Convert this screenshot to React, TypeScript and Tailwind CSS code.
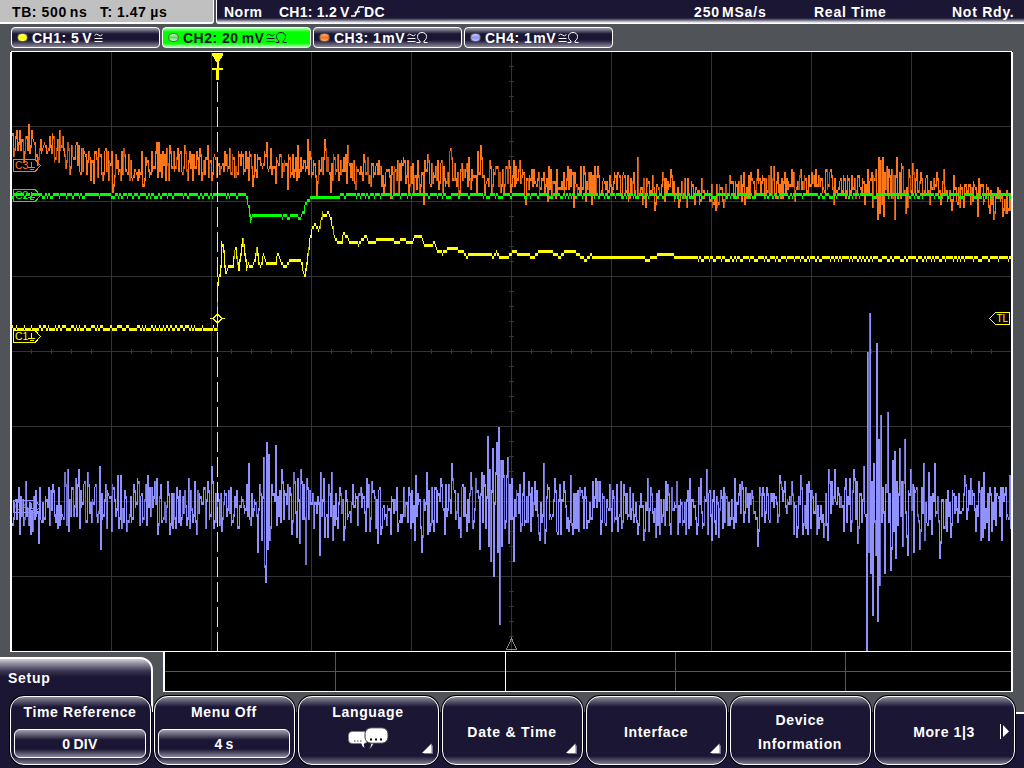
import React from "react";

const FONT = "[font-family:'Liberation_Sans',Arial,sans-serif]";

/* ---------- signal data: [x, y] peaks in screen units ---------- */

const CH4_PEAKS = `19,487 20,535 26,481 33,532 39,544 40,487 42,523 46,496 50,526 53,484 56,522 58,529 65,472 67,526 68,469 69,531 73,487 76,478 77,516 79,469 80,529 85,481 88,472 92,523 96,484 98,522 100,466 101,550 106,484 107,529 112,532 113,484 118,475 120,520 121,475 122,529 125,490 129,522 133,520 135,490 140,526 142,493 146,484 147,526 148,475 152,487 155,481 157,478 158,535 161,484 163,523 166,522 168,481 172,493 177,487 184,513 187,526 189,478 193,523 197,535 200,493 205,487 208,481 210,520 212,466 218,493 223,520 225,490 229,490 233,523 237,490 239,529 245,514 249,463 251,526 258,553 260,484 262,541 264,457 265,568 266,583 267,442 268,550 269,454 270,541 272,484 274,493 276,445 277,526 278,496 281,523 282,469 284,520 288,484 290,487 292,535 294,472 297,538 300,544 301,469 304,484 306,565 307,478 309,520 314,529 320,556 321,472 324,478 326,520 328,538 329,484 332,472 333,541 338,529
340,487 344,541 346,490 351,523 353,484 358,526 361,487 366,532 370,532 374,490 376,529 378,544 380,487 381,535 387,526 391,535 392,496 397,487 402,523 404,487 408,523 415,541 416,475 422,553 427,472 429,490 432,487 434,532 438,490 445,535 446,484 452,463 454,487 459,529 461,538 463,484 465,487 467,532 469,523 471,472 473,529 476,478 478,490 480,550 482,472 484,475 486,528 488,436 489,547 490,469 491,562 493,448 494,577 496,472 497,442 498,553 499,427 500,625 501,460 502,547 503,460 505,529 507,475 508,457 509,544 512,478 514,562 517,490 520,484 524,472 525,526 529,481 532,487 535,481 539,535 540,541 544,463 545,544 549,487 552,520 555,478 558,535 560,484 561,535 564,481 567,528 569,532 571,475 573,535 577,528 579,532 582,490 585,487 592,520 596,478 600,481 601,535 606,526 610,484 612,532 617,484 619,520 621,481 622,529 627,493 634,523 638,535 641,493 644,541 648,478 651,487 656,538 659,490 665,526 668,484 671,535 672,487 677,481 678,535
683,526 686,535 688,490 690,478 693,499 697,535 701,478 707,469 708,535 710,490 712,541 714,490 716,535 721,490 723,529 726,492 730,526 734,529 735,478 740,484 744,523 746,487 749,522 752,490 757,520 758,547 760,487 763,487 765,522 770,522 773,493 778,523 780,475 782,487 785,481 787,515 792,481 797,538 801,475 806,529 807,484 808,535 809,481 812,490 819,529 822,523 824,538 826,493 828,541 829,469 835,469 838,487 842,508 844,532 846,478 850,478 851,532 854,469 856,520 858,544 861,493 864,466 866,517 867,651 868,352 869,553 870,313 871,574 872,481 873,616 874,463 876,556 877,343 878,622 879,439 880,586 881,415 883,487 885,574 888,412 889,523 891,571 893,460 895,451 896,558 898,526 900,448 903,547 905,439 907,538 908,556 911,469 914,553 917,487 919,523 920,550 924,463 925,541 928,526 929,472 932,535 935,463 937,514 940,559 943,499 945,529 948,490 951,538 956,496 958,523 965,475 967,520 971,478 973,490 976,532 979,481 981,541 983,538 984,472 989,541 990,487 992,532 998,493 1000,516 1002,541 1006,487 1009,519 1010,475 1011,529`;

const CH3_PEAKS = `13,133 14,156 17,130 18,150 20,130 24,162 26,136 30,153 34,139 38,165 41,139 43,150 49,152 53,133 57,152 60,130 61,150 64,148 66,168 73,154 80,171 81,174 85,151 91,180 92,160 94,183 97,157 100,154 103,180 106,148 109,180 112,152 113,192 114,186 116,154 121,180 125,154 128,174 133,180 138,180 142,151 149,168 152,151 154,170 157,142 159,142 160,172 163,152 166,180 170,145 172,170 175,172 178,148 181,151 183,174 185,145 188,180 190,150 193,180 197,152 199,175 202,180 208,145 212,180 215,154 220,175 225,150 228,172 230,148 232,174 237,177 242,151 244,174 249,180 251,155 253,186 257,177 260,157 263,168 267,142 269,171 271,147 274,166 276,184 281,154 284,171 288,189 293,155 298,145 302,172 305,160 308,139 310,152 312,177 317,196 321,172 325,139 328,157 331,194 333,180 335,157
342,174 344,157 348,145 349,160 353,181 356,190 358,170 364,154 366,171 369,183 371,186 377,163 382,186 384,192 387,169 389,169 391,198 394,196 396,170 399,194 402,160 404,157 408,160 409,193 413,163 417,189 420,195 422,172 424,204 426,168 428,154 431,188 436,166 439,190 441,163 442,160 443,192 446,188 448,171 450,150 451,148 453,180 457,188 459,200 462,163 467,163 471,189 475,175 478,151 479,172 481,145 483,174 486,188 490,160 493,186 498,166 502,186 507,166 509,160 511,192 514,160 517,184 520,160 522,178 525,200 526,204 530,176 532,169 534,169 537,188 539,172 544,172 548,201 550,190 552,200 554,180 557,169 563,190 568,166 571,188 574,207 576,181 581,166 584,166 587,182 592,204 595,166 598,166 601,196 604,178 608,195 611,184 615,173 619,172 622,196 624,172 627,192 634,172 636,198 637,200 638,157 639,200 642,188 646,207 649,181 652,192 655,210 656,204 659,187 663,172 667,196 669,190 674,181 676,200 679,208
682,181 684,198 687,207 692,181 695,204 700,206 703,190 706,196 710,203 713,207 717,184 721,186 724,207 728,200 732,181 735,196 739,181 744,172 748,200 753,178 755,198 758,169 761,192 763,175 765,200 769,176 772,196 774,166 776,200 782,178 785,172 788,190 792,169 796,192 801,169 804,190 807,195 812,172 816,169 821,178 825,192 827,169 831,169 834,205 838,193 841,179 845,178 850,196 855,178 857,192 859,175 862,196 867,193 870,180 872,172 873,207 876,169 877,200 878,219 879,157 880,214 881,160 882,205 883,157 884,217 886,190 887,166 888,195 889,169 891,196 892,169 893,200 895,219 897,157 899,195 902,163 903,166 906,214 909,169 911,194 913,163 915,194 917,169 921,172 924,196 927,175 930,204 937,172 941,204 944,169 948,201 952,210 955,190 958,204 961,184 964,207 970,184 973,202 975,184 978,216 982,184 986,200 990,213 994,219 997,200 1000,190 1003,216 1005,200 1008,213 1010,194 1011,210`;

const CH1_PATH = `12,329 216,329 217,283 219,274 220,265 221,241 223,250 224,265 225,273 226,272 228,266 232,266 234,250 235,248 236,257 238,270 239,260 242,239 244,254 246,269 248,263 249,266 252,267 254,260 256,248 258,262 260,266 263,254 266,263 270,263 275,262 277,254 279,257 281,263 285,267 288,262 292,261 300,261 302,268 304,276 305,270 307,255 309,240 311,230 314,224 318,230 320,222 322,212 324,216 328,212 330,218 332,228 334,236 337,242 341,242 343,233 347,237 349,242 356,242 358,245 361,240 366,236 368,242 373,243 376,240 392,240 397,243 402,239 408,242 412,241 415,236 421,236 424,245 431,245 434,242 437,251 442,253 446,250 450,248 455,248 459,251 463,251 466,257 470,254 490,254 493,257 496,252 500,258 506,258 510,254 514,251 518,254 528,254 532,258 538,252 550,251 559,257 565,252 573,251 577,254 585,260 590,255 594,257 608,256 620,257 643,257 646,260 652,258 660,254 670,254 675,257 1011,257`;

const CH2_PATH = `12,194 245,194 246,198 248,206 249,215 250,221 252,215 301,215 303,212 304,206 308,200 311,197 339,197 341,194 1011,194`;

const CH3_TREND = "12,147 55,150 75,158 100,167 240,165 300,164 400,174 470,176 520,178 600,184 680,194 740,188 800,184 870,186 960,192 1011,200";

const parse = (s: string): number[][] =>
  s.trim().split(/\s+/).map((p) => p.split(",").map(Number));

const X0 = 12;
const X1 = 1010;

function rng(seed: number) {
  let s = seed;
  return () => {
    s = (s * 1664525 + 1013904223) % 4294967296;
    return s / 4294967296;
  };
}

function interpolate(points: number[][], x: number): number {
  for (let i = 1; i < points.length; i++) {
    if (x <= points[i][0]) {
      const [xa, ya] = points[i - 1];
      const [xb, yb] = points[i];
      return ya + ((yb - ya) * (x - xa)) / (xb - xa);
    }
  }
  return points[points.length - 1][1];
}

const quantize = (y: number) => 3 * Math.floor((y - 1) / 3) + 1;

/* One vertical span per pixel column, joining it to the previous sample. */
function columns(samples: number[], seed: number, dimShare: number) {
  const rand = rng(seed);
  let bright = "";
  let dim = "";
  for (let i = 0; i < samples.length; i++) {
    const cur = samples[i];
    const prev = samples[Math.max(0, i - 1)];
    const apart = Math.abs(cur - prev) > 3;
    const a = apart ? Math.min(prev, cur) : cur;
    const b = (apart ? Math.max(prev, cur) : cur) + 3;
    const d = `M${X0 + i} ${a}h1V${Math.min(b, 651)}h-1z`;
    if (apart && rand() < dimShare) dim += d;
    else bright += d;
  }
  return { bright, dim };
}

function noisy(peaks: string, centre: (x: number) => number, spread: number, seed: number) {
  const rand = rng(seed);
  const marks = new Map(parse(peaks).map(([x, y]) => [x - 1, y]));
  const out: number[] = [];
  let side = 1;
  let hold = 0;
  let drift = 0;
  let last = centre(X0);
  for (let x = X0; x <= X1; x++) {
    drift = drift * 0.85 + (rand() - 0.5) * spread * 0.5;
    const c = centre(x) + drift;
    const m = marks.get(x);
    if (m !== undefined) {
      last = m > c ? m - 2 : m + 1;
      side = m > c ? -1 : 1;
      hold = rand() < 0.4 ? 1 : 0;
    } else if (hold > 0) {
      hold--;
      last += (c - last) * 0.35;
    } else {
      last = c + side * spread * 1.15 * rand();
      if (rand() < 0.85) side = -side;
      hold = rand() < 0.35 ? 1 : 0;
    }
    out.push(quantize(last));
  }
  return out;
}

function dithered(path: string, seed: number, amount: (x: number) => number, longest: number) {
  const rand = rng(seed);
  const pts = parse(path);
  const out: number[] = [];
  let low = false;
  let run = 0;
  for (let x = X0; x <= X1; x++) {
    if (run <= 0) {
      low = !low;
      run = low ? 1 + Math.floor(rand() * rand() * 5) : 2 + Math.floor(rand() * rand() * longest);
    }
    run--;
    out.push(quantize(interpolate(pts, x)) + (low ? amount(x) : 0));
  }
  return out;
}

const trend3 = parse(CH3_TREND);
const ch4 = columns(noisy(CH4_PEAKS, () => 506, 18, 41), 5, 0.2);
const ch3 = columns(noisy(CH3_PEAKS, (x) => interpolate(trend3, x), 12, 97), 8, 0.22);
const ch1 = columns(
  dithered(CH1_PATH, 13, (x) => (x < 216 ? -3 : x > 697 ? 3 : 0), 10),
  3,
  0.25,
);
const ch2 = columns(
  dithered(CH2_PATH, 29, (x) => (x < 245 || (x > 277 && x < 301) || x > 341 ? 3 : 0), 16),
  4,
  0.2,
);

/* ---------- scope ---------- */

function Tag({ y, label, color }: { y: number; label: string; color: string }) {
  return (
    <g stroke={color} fill="none">
      <path d={`M13.5 ${y + 0.5}H35L40.5 ${y + 6.5}L35 ${y + 12.5}H13.5z`} />
      <text x="15" y={y + 10} fontSize="10.5" stroke="none" fill={color} className={FONT}>
        {label}
      </text>
      <path d={`M31.5 ${y + 3}v5M28 ${y + 8.5}h7M29.5 ${y + 10.5}h4`} />
    </g>
  );
}

function Scope() {
  const vx = [111, 211, 311, 411, 511, 611, 711, 811, 911];
  const hy = [126, 201, 276, 351, 426, 501, 576];
  const dashes = Array.from({ length: 23 }, (_, i) => 82 + i * 25);
  return (
    <svg
      className="ml-[10px] block h-[601px] w-[1003px] shrink-0 bg-black"
      viewBox="10 51 1003 601"
      shapeRendering="crispEdges"
    >
      <g fill="#333333">
        {vx.map((x) => <rect key={x} x={x} y={52} width={1} height={599} />)}
        {hy.map((y) => <rect key={y} x={12} y={y} width={999} height={1} />)}
        {Array.from({ length: 49 }, (_, i) => (
          <rect key={i} x={31 + i * 20} y={349} width={1} height={5} />
        ))}
        {Array.from({ length: 39 }, (_, i) => (
          <rect key={i} x={509} y={66 + i * 15} width={5} height={1} />
        ))}
      </g>
      <path d={ch3.dim} fill="#b85414" />
      <path d={ch3.bright} fill="#ff751a" />
      <path d={ch2.dim} fill="#00a800" />
      <path d={ch2.bright} fill="#00ff00" />
      <path d={ch1.dim} fill="#b4b400" />
      <path d={ch1.bright} fill="#ffff00" />
      <path d={ch4.dim} fill="#7070c8" />
      <path d={ch4.bright} fill="#9090ff" />

      <g fill="#ffff00">
        <path d="M212 53h11v2l-4 7v6h4v2h-4v10h-3v-10h-4v-2h5v-5l-5 -8z" />
        {dashes.map((y) => (
          <rect key={y} x={217} y={y} width={1} height={Math.min(20, 651 - y)} />
        ))}
      </g>
      <path d="M210 318.5h3l4.5-4.5 4.5 4.5-4.5 4.5-4.5-4.5M222 318.5h3" stroke="#ffff00" fill="none" />

      <Tag y={159} label="C3" color="#ff751a" />
      <Tag y={189} label="C2" color="#00ff00" />
      <Tag y={330} label="C1" color="#ffff00" />
      <Tag y={500} label="C4" color="#9090ff" />

      <path d="M989.5 318.5l6-6h14v12h-14z" stroke="#ffff00" fill="none" />
      <text x="996.5" y="322" fontSize="10" fill="#ffff00" className={FONT}>TL</text>
      <path d="M511.5 638.5l-5 10.5h10z" stroke="#8a8a8a" fill="none" />

      <g fill="#ffffff">
        <rect x={11} y={51} width={1001} height={1} />
        <rect x={10} y={52} width={2} height={600} />
        <rect x={1011} y={52} width={2} height={600} />
        <rect x={10} y={651} width={1003} height={1} />
      </g>
    </svg>
  );
}

function Overview() {
  return (
    <svg
      className="block h-[40px] w-[850px] shrink-0 bg-black"
      viewBox="163 652 850 40"
      shapeRendering="crispEdges"
    >
      <g fill="#555555">
        <rect x={165} y={671} width={846} height={1} />
        <rect x={335} y={652} width={1} height={39} />
        <rect x={675} y={652} width={1} height={39} />
        <rect x={845} y={652} width={1} height={39} />
      </g>
      <g fill="#ffffff">
        <rect x={505} y={652} width={1} height={39} />
        <rect x={163} y={652} width={2} height={39} />
        <rect x={1011} y={652} width={2} height={39} />
        <rect x={163} y={691} width={850} height={1} />
      </g>
    </svg>
  );
}

/* ---------- header ---------- */

function Header() {
  return (
    <header className="flex h-6 shrink-0 whitespace-nowrap text-[14px] leading-[24px] font-bold tracking-[0.5px] text-white">
      <div className="flex h-6 w-[214px] shrink-0 rounded-br-[3px] border-r border-b-2 border-white bg-[#c0c0c0] pl-3 text-black">
        <span className="w-[88px] tracking-[0.6px]">TB: 500<span className="pl-[3px]">ns</span></span>
        <span className="tracking-[0.5px]">T: 1.47<span className="pl-[4px]">µs</span></span>
      </div>
      <div className="ml-[2px] flex h-6 flex-1 rounded-bl-[3px] border-b border-l border-white bg-[linear-gradient(#1a1633_0,#1a1633_18px,#69667c_20px,#ffffff_23px)] pl-[7px]">
        <span className="w-[55px]">Norm</span>
        <span className="w-[72px] tracking-[0.25px]">CH1: 1.2<span className="pl-[3px]">V</span></span>
        <svg className="mt-[6px] h-[11px] w-[13px] shrink-0" viewBox="0 0 13 11">
          <path d="M0 10H4L8 1H13M3.5 6.5L9 5.5" fill="none" stroke="#fff" strokeWidth="1.6" />
        </svg>
        <span className="w-[330px]">DC</span>
        <span className="w-[120px] tracking-[0.85px]">250<span className="pl-[2px]">MSa/s</span></span>
        <span className="w-[138px] tracking-[0.75px]">Real Time</span>
        <span className="tracking-[0.75px]">Not Rdy.</span>
      </div>
    </header>
  );
}

const CHANNELS = [
  { name: "CH1: 5", unit: "V", ohm: false, dot: "bg-[linear-gradient(#ffff80,#ffff00_50%,#ffff60)]", active: false },
  { name: "CH2: 20", unit: "mV", ohm: true, dot: "bg-[linear-gradient(#c0ffc0,#50e050_50%,#c0ffc0)]", active: true },
  { name: "CH3: 1", unit: "mV", ohm: true, dot: "bg-[linear-gradient(#ffb080,#ff7018_50%,#ffa870)]", active: false },
  { name: "CH4: 1", unit: "mV", ohm: true, dot: "bg-[linear-gradient(#c8c8ff,#9090ff_50%,#c0c0ff)]", active: false },
];

function Channels() {
  return (
    <div className="flex h-[27px] shrink-0 gap-[2px] pt-[3px] pl-[11px]">
      {CHANNELS.map((c) => (
        <div
          key={c.name}
          className={`flex h-[21px] w-[149px] items-center whitespace-nowrap rounded-[4px] border-[1.5px] border-white pl-[5px] text-[14px] leading-5 font-bold tracking-[0.5px] ${
            c.active
              ? "bg-[linear-gradient(#b0ffb0_0,#00ff00_4px,#00ff00_15px,#b0ffb0_19px)] text-[#1a1633]"
              : "bg-[linear-gradient(#a09fac_0,#1a1633_6px,#1a1633_12px,#8a889a_19px)] text-white"
          }`}
        >
          <span className={`mr-[4px] h-[9px] w-[11px] rounded-full border border-[#5c5c50] ${c.dot}`} />
          <span>{c.name}</span>
          <span className={c.name === "CH1: 5" || c.active ? "pl-[3px]" : "pl-[1px]"}>{c.unit}</span>
          <svg className="ml-[2px] h-3 w-[9px]" viewBox="0 0 9 12" fill="none" stroke="currentColor">
            <path d="M.5 3.5Q2.5 1 4.5 3T8.5 2.5M.5 6.5h8M.5 9.5h8" />
          </svg>
          {c.ohm && (
            <svg className="h-[13px] w-[12px]" viewBox="0 0 12 13" fill="none" stroke="currentColor">
              <path d="M.5 11.5H4V10C1.7 8.5 1.5 6.8 1.5 5.5 1.5 3 3.5 1.5 6 1.5S10.500 3 10.500 5.500C10.500 6.800 10.300 8.500 8 10V11.500H11.500" />
            </svg>
          )}
        </div>
      ))}
    </div>
  );
}

/* ---------- soft-key menu ---------- */

function Key({ children, more }: { children: React.ReactNode; more?: boolean }) {
  return (
    <div className="relative flex h-[69px] w-[141px] shrink-0 flex-col items-center rounded-[14px] border border-white bg-[linear-gradient(#8b899b_0,#1a1633_10px,#1a1633_59px,#8b899b_68px)] pr-px text-[14px] leading-[24px] font-bold tracking-[0.65px] text-white shadow-[0_0_0_1px_#000]">
      {children}
      {more && (
        <svg className="absolute right-[5px] bottom-[10px] h-[11px] w-[11px]" viewBox="0 0 11 11">
          <path d="M1 11L11 2V11z" fill="#77768a" />
          <path d="M0 10L9.500 .5V10z" fill="#fff" />
        </svg>
      )}
    </div>
  );
}

function Value({ children }: { children: React.ReactNode }) {
  return (
    <div className="mt-[5px] ml-[3px] flex h-[29px] w-[132px] items-center justify-center self-start rounded-[6px] border border-white bg-[linear-gradient(#a09fac_0,#1a1633_10px,#1a1633_19px,#8b899b_27px)] tracking-[0.3px]">
      {children}
    </div>
  );
}

function Bubbles() {
  return (
    <svg className="mt-[3px] h-[24px] w-[42px]" viewBox="0 0 42 24">
      <rect x="1.500" y="4.500" width="19" height="12" rx="4" fill="#fff" stroke="#777" strokeWidth=".6" />
      <path d="M14 15Q14.500 19 17.500 21Q16 18 17.500 15z" fill="#fff" />
      <path d="M24 15Q24.500 19 21.500 22.500Q26 20 27 15z" fill="#fff" stroke="#111" strokeWidth=".5" />
      <rect x="18" y=".8" width="23" height="15.400" rx="6" fill="#fff" stroke="#333" strokeWidth="1" />
      <path d="M7 14h1.500M10 14h1.500M13 14h1.500" stroke="#444" strokeWidth="1.200" />
      <path d="M23 12.500h2M28 12.500h2M33 12.500h2" stroke="#000" strokeWidth="2" />
    </svg>
  );
}

export default function App() {
  return (
    <div className={`flex h-[768px] w-[1024px] flex-col overflow-hidden bg-[#505357] ${FONT}`}>
      <Header />
      <Channels />
      <Scope />
      <div className="flex h-[43px] shrink-0">
        <div className="mt-[5px] mr-[10px] h-[60px] w-[153px] shrink-0 rounded-tr-[13px] border-t-2 border-r-2 border-white bg-[linear-gradient(#d0cfd6_0,#8b899b_5px,#3a3650_12px,#1a1633_18px)] pt-[7px] pl-[8px] text-[14px] leading-[24px] font-bold tracking-[0.75px] text-white">
          Setup
        </div>
        <Overview />
      </div>
      <div className="flex h-[73px] shrink-0">
        <div className="z-10 flex h-[73px] w-[1016px] shrink-0 gap-[3px] bg-[linear-gradient(transparent_17px,#1a1633_17px)] pt-px pl-[10px]">
          <Key>
            <span className="mt-[3px]">Time Reference</span>
            <Value>0<span className="pl-[3px]">DIV</span></Value>
          </Key>
          <Key>
            <span className="mt-[3px]">Menu Off</span>
            <Value>4<span className="pl-[3px]">s</span></Value>
          </Key>
          <Key more>
            <span className="mt-[3px]">Language</span>
            <Bubbles />
          </Key>
          <Key more><span className="mt-[23px] tracking-[0.8px]">Date &amp; Time</span></Key>
          <Key more><span className="mt-[23px]">Interface</span></Key>
          <Key>
            <span className="mt-[11px]">Device</span>
            <span>Information</span>
          </Key>
          <Key>
            <span className="mt-[23px] tracking-[0.6px]">More 1|3</span>
            <svg className="absolute top-[26px] right-[4px] h-[17px] w-[11px]" viewBox="0 0 11 17">
              <path d="M1.500 1V16" stroke="#fff" />
              <path d="M4 2L10 8.500 4 14z" fill="#fff" />
            </svg>
          </Key>
        </div>
        <div className="mt-[17px] flex-1 border-t-2 border-white bg-[#1a1633]" />
      </div>
    </div>
  );
}
